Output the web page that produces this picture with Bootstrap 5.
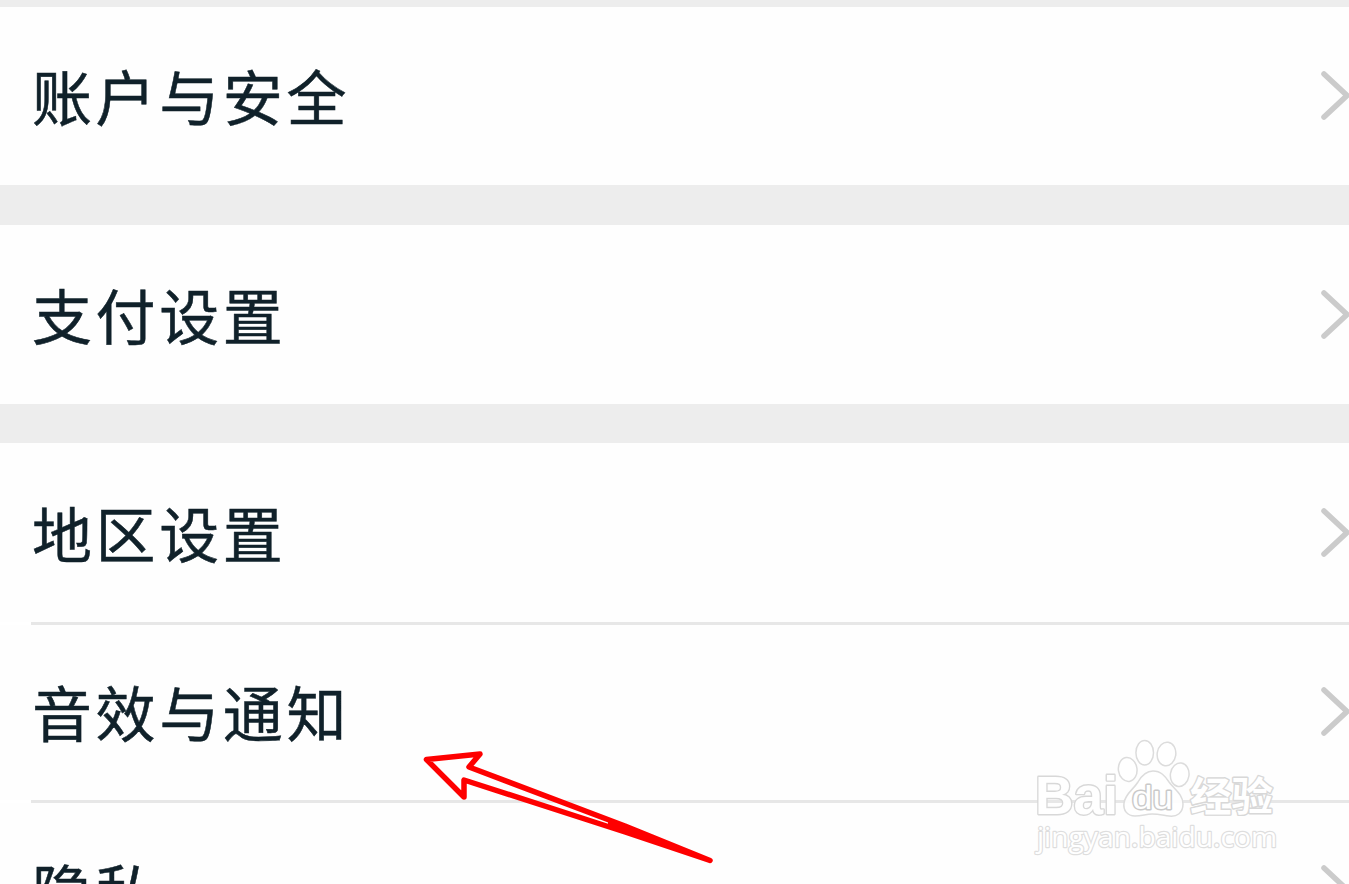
<!DOCTYPE html>
<html lang="zh-CN">
<head>
  <meta charset="UTF-8" />
  <meta name="viewport" content="width=device-width, initial-scale=1.0"/>
  <title>设置</title>
  <link href="https://cdn.jsdelivr.net/npm/bootstrap@5.3.0/dist/css/bootstrap.min.css" rel="stylesheet">
  <style>
    body {
      background-color: #ededed;
      color: #10212a;
      font-family: "Noto Sans CJK SC", sans-serif;
    }
    .screen {
      height: 884px;
      padding-top: 7px;
    }
    .settings {
      --bs-list-group-bg: #fefefe;
      --bs-list-group-color: #10212a;
      margin-bottom: 40px;
    }
    .settings.pay {
      margin-bottom: 39px;
    }
    .setting {
      height: 178px;
      padding: 0 0 2px 32px;
      border: 0;
      font-size: 60px;
      line-height: 1;
      letter-spacing: 3.6px;
      -webkit-text-stroke: .5px #10212a;
    }
    .pay .setting {
      height: 179px;
    }
    .divider {
      height: 3px;
      margin-left: 31px;
      background-color: #e7e7e7;
    }
    .region .setting {
      height: 179px;
    }
    .region .setting ~ .setting {
      height: 175px;
      padding-bottom: 4px;
    }
    .chevron {
      width: 32px;
      height: 56px;
      fill: none;
      stroke: #cbcbcb;
      stroke-width: 5.5;
      stroke-linecap: round;
      flex-shrink: 0;
    }
    .arrow {
      left: 410px;
      top: 740px;
    }
    .watermark {
      left: 1020px;
      top: 730px;
    }
  </style>
</head>

<body>
  <div class="screen position-relative overflow-hidden">
    <div class="list-group list-group-flush settings">
      <div class="list-group-item setting d-flex justify-content-between align-items-center">
        <span>账户与安全</span>
        <svg class="chevron" viewBox="0 0 32 56"><path d="M7 7L30 28.5L7 50"/></svg>
      </div>
    </div>

    <div class="list-group list-group-flush settings pay">
      <div class="list-group-item setting d-flex justify-content-between align-items-center">
        <span>支付设置</span>
        <svg class="chevron" viewBox="0 0 32 56"><path d="M7 7L30 28.5L7 50"/></svg>
      </div>
    </div>

    <div class="list-group list-group-flush settings region">
      <div class="list-group-item setting d-flex justify-content-between align-items-center">
        <span>地区设置</span>
        <svg class="chevron" viewBox="0 0 32 56"><path d="M7 7L30 28.5L7 50"/></svg>
      </div>
      <div class="bg-white"><div class="divider"></div></div>
      <div class="list-group-item setting d-flex justify-content-between align-items-center">
        <span>音效与通知</span>
        <svg class="chevron" viewBox="0 0 32 56"><path d="M7 7L30 28.5L7 50"/></svg>
      </div>
      <div class="bg-white"><div class="divider"></div></div>
      <div class="list-group-item setting d-flex justify-content-between align-items-center">
        <span>隐私</span>
        <svg class="chevron" viewBox="0 0 32 56"><path d="M7 7L30 28.5L7 50"/></svg>
      </div>
    </div>

    <!-- red pointer -->
    <svg class="arrow position-absolute" width="310" height="130" viewBox="0 0 310 130">
      <path d="M16.5 19.5L70 14L59 27L215 86L300 120.5L215 92L54 40L54 57Z" fill="none" stroke="#fe0000" stroke-width="5.5" stroke-linejoin="round"/>
      <path d="M198 79.5L215 86L300 120.5L215 92L198 86.5Z" fill="#fe0000"/>
    </svg>

    <!-- watermark -->
    <svg class="watermark position-absolute" width="270" height="130" viewBox="0 0 270 130">
      <g fill="#fff" fill-opacity=".9" stroke="#dcdcdc" stroke-width="1.5" stroke-linejoin="round">
        <ellipse cx="124.7" cy="22.7" rx="8.8" ry="12.3"/>
        <ellipse cx="146.5" cy="24" rx="9.3" ry="11.8" transform="rotate(8 146.5 24)"/>
        <ellipse cx="107.7" cy="39.5" rx="9.3" ry="12" transform="rotate(-8 107.7 39.5)"/>
        <ellipse cx="159.7" cy="44.7" rx="9.3" ry="11.8" transform="rotate(8 159.7 44.7)"/>
        <path d="M133 41C141 41 145 46 149 52C154 59 163 64 163 74C163 83 157 87 149 86C142 85 138 84 132 84C126 84 122 86 115 86C107 86 103 80 104 73C105 64 113 60 118 52C122 45 126 41 133 41Z"/>
      </g>
      <g fill="#fff" stroke="#d8d8d8" stroke-width="2.8" stroke-linejoin="round" paint-order="stroke">
        <text x="15" y="84" font-family="Liberation Sans, sans-serif" font-weight="700" font-size="54" textLength="83" lengthAdjust="spacingAndGlyphs">Bai</text>
        <text x="112" y="79" font-family="Liberation Sans, sans-serif" font-size="33" textLength="41" lengthAdjust="spacingAndGlyphs" stroke="#cacaca">du</text>
        <text x="170" y="81" font-family="Noto Sans CJK SC, sans-serif" font-weight="700" font-size="40" textLength="83" lengthAdjust="spacingAndGlyphs">经验</text>
        <text x="17" y="117" font-family="Open Sans, sans-serif" font-size="28" textLength="240" lengthAdjust="spacingAndGlyphs" stroke="#dedede" stroke-width="2.4">jingyan.baidu.com</text>
      </g>
    </svg>
  </div>

  <script src="https://cdn.jsdelivr.net/npm/bootstrap@5.3.0/dist/js/bootstrap.bundle.min.js"></script>
</body>
</html>
